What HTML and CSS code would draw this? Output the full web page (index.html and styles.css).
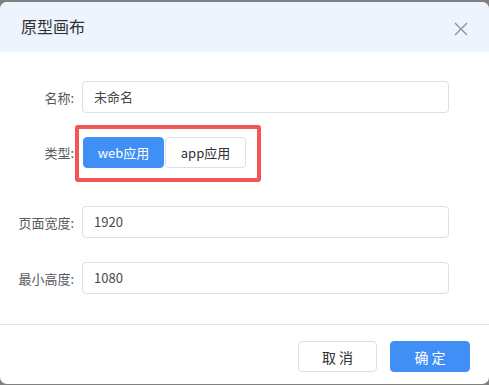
FILE: index.html
```html
<!DOCTYPE html>
<html lang="zh">
<head>
<meta charset="utf-8">
<link rel="stylesheet" href="styles.css">
</head>
<body>
<div class="dialog">
  <div class="header">
    <span class="title">原型画布</span>
    <svg class="close" width="14" height="14" viewBox="0 0 14 14"><path d="M1 1L13 13M13 1L1 13" stroke="#8d9095" stroke-width="1.4" fill="none"/></svg>
  </div>
  <div class="body">
    <div class="row r1">
      <label class="label">名称:</label>
      <div class="input">未命名</div>
    </div>
    <div class="row r2">
      <label class="label">类型:</label>
      <div class="group">
        <div class="highlight"></div>
        <button class="seg active">web应用</button>
        <button class="seg">app应用</button>
      </div>
    </div>
    <div class="row r3">
      <label class="label">页面宽度:</label>
      <div class="input">1920</div>
    </div>
    <div class="row r4">
      <label class="label">最小高度:</label>
      <div class="input">1080</div>
    </div>
  </div>
  <div class="footer">
    <button class="btn">取 消</button>
    <button class="btn primary">确 定</button>
  </div>
</div>
</body>
</html>
```
FILE: styles.css
```css
* { box-sizing: border-box; }
html, body { margin: 0; padding: 0; }
body {
  background: #808080;
  font-family: "Noto Sans CJK SC", "Noto Sans", sans-serif;
  color: #303133;
  padding-top: 2px;
  width: 489px;
  height: 385px;
  overflow: hidden;
}
.dialog {
  width: 489px;
  height: 382px;
  background: #fff;
  border-radius: 7px;
  overflow: hidden;
  display: flex;
  flex-direction: column;
}
.header {
  height: 50px;
  background: #eef4fd;
  display: flex;
  align-items: center;
  justify-content: space-between;
  padding: 0 21px 0 21px;
}
.title {
  font-size: 16px;
  color: #303133;
  line-height: 1;
  margin-top: -2px;
}
.close { margin-top: 4px; }
.body {
  padding-top: 29px;
  height: 273px;
  border-bottom: 1px solid #e4e4e4;
}
.row {
  display: flex;
  align-items: center;
}
.label {
  width: 82px;
  padding-right: 8px;
  text-align: right;
  font-size: 13px;
  color: #555a60;
  white-space: nowrap;
}
.input {
  width: 367px;
  height: 32px;
  border: 1px solid #dcdfe6;
  border-radius: 4px;
  padding: 0 11px;
  font-size: 13px;
  line-height: 30px;
  color: #45484d;
}
.r1 { margin-bottom: 24px; }
.r2 { margin-bottom: 38px; height: 31px; }
.r3 { margin-bottom: 24px; }
.group {
  position: relative;
  display: flex;
  gap: 1px;
  margin-left: 1px;
}
.highlight {
  position: absolute;
  left: -8px;
  top: -12px;
  width: 186px;
  height: 57px;
  border: 4px solid #f65556;
  border-radius: 3px;
  pointer-events: none;
}
.seg {
  width: 81px;
  height: 31px;
  border: 1px solid #dcdfe6;
  background: #fff;
  border-radius: 4px;
  font-family: inherit;
  font-size: 13px;
  color: #303133;
  padding: 0;
}
.seg.active {
  background: #3f8ff7;
  border-color: #3f8ff7;
  color: #fff;
}
.footer {
  flex: 1;
  display: flex;
  justify-content: flex-end;
  align-items: flex-start;
  padding: 16px 19px 0 0;
  gap: 13px;
}
.btn {
  width: 79px;
  height: 31px;
  border: 1px solid #dcdfe6;
  background: #fff;
  border-radius: 4px;
  font-family: inherit;
  font-size: 14px;
  color: #303133;
  padding: 0;
}
.btn.primary {
  width: 80px;
  background: #3f8ff7;
  border-color: #3f8ff7;
  color: #fff;
}
```
